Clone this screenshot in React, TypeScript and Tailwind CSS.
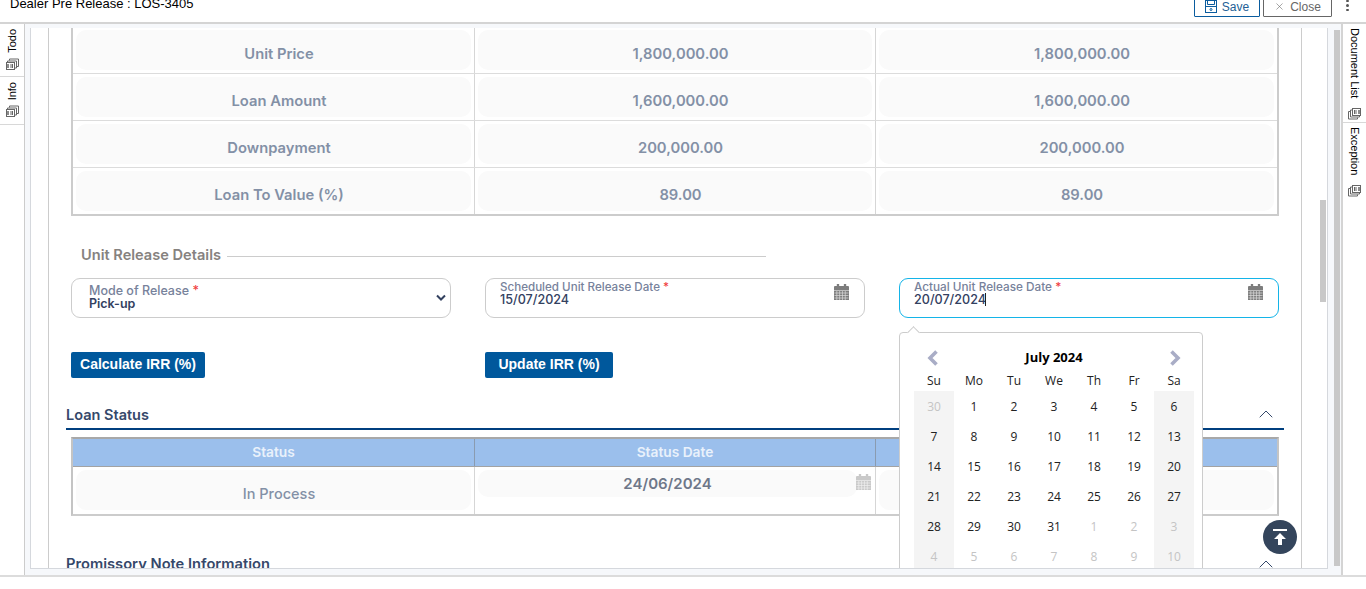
import { ChevronUp, X } from "lucide-react";

const rows = [
  ["Unit Price", "1,800,000.00", "1,800,000.00"],
  ["Loan Amount", "1,600,000.00", "1,600,000.00"],
  ["Downpayment", "200,000.00", "200,000.00"],
  ["Loan To Value (%)", "89.00", "89.00"],
];

const weekDays = ["Su", "Mo", "Tu", "We", "Th", "Fr", "Sa"];

// day number and whether it belongs to another month
const calendarDays: [number, boolean][] = [
  [30, true], [1, false], [2, false], [3, false], [4, false], [5, false], [6, false],
  [7, false], [8, false], [9, false], [10, false], [11, false], [12, false], [13, false],
  [14, false], [15, false], [16, false], [17, false], [18, false], [19, false], [20, false],
  [21, false], [22, false], [23, false], [24, false], [25, false], [26, false], [27, false],
  [28, false], [29, false], [30, false], [31, false], [1, true], [2, true], [3, true],
  [4, true], [5, true], [6, true], [7, true], [8, true], [9, true], [10, true],
];

function TabIcon({ flip }: { flip?: boolean }) {
  return (
    <svg width="13" height="12" viewBox="0 0 13 12" fill="none" stroke="#666" strokeWidth="1" className={flip ? "rotate-180" : ""}>
      <path d="M3.5 2.5V1h9v7.5H11" />
      <path d="M1.5 4.5V3h9v7H9" />
      <rect x="0.5" y="4.5" width="8" height="7" fill="#fff" />
      <path d="M5 6v4M6.5 6v4" />
      <path d="M2 6v4" strokeWidth="1.5" />
    </svg>
  );
}

function CalendarIcon({ color }: { color: string }) {
  return (
    <svg width="15" height="16" viewBox="0 0 16 16" preserveAspectRatio="none">
      <rect x="3" y="0" width="2.5" height="3" fill={color} />
      <rect x="10.5" y="0" width="2.5" height="3" fill={color} />
      <path d="M1 2h14a1 1 0 0 1 1 1v3H0V3a1 1 0 0 1 1-1z" fill={color} />
      <rect x="0" y="6.5" width="16" height="9.5" fill={color} />
      <path d="M0.5 9h15M0.5 11.5h15M0.5 14h15M3 7v9M6 7v9M9 7v9M12 7v9" stroke="#fff" strokeWidth="0.7" opacity="0.75" />
    </svg>
  );
}

function SideTab({ label, height, left, last }: { label: string; height: string; left?: boolean; last?: boolean }) {
  return (
    <div className={`flex flex-col items-center ${left ? "pt-[5px]" : "pt-[4px]"} ${last ? "" : "border-b border-[#d8d8d8]"} ${height}`}>
      <span className={`whitespace-nowrap font-['Liberation_Sans'] text-[11px] leading-[14px] text-black [writing-mode:vertical-rl] ${left ? "rotate-180" : ""}`}>
        {label}
      </span>
      <div className={left ? "mt-[5px]" : "mt-[10px]"}>
        <TabIcon flip={!left} />
      </div>
    </div>
  );
}

function Field({ label, value, focused }: { label: string; value: string; focused?: boolean }) {
  return (
    <div className={`relative h-[40px] rounded-[9px] border bg-white pl-[14px] pt-[2px] ${focused ? "border-[#14b4e8]" : "border-[#cccccc]"}`}>
      <div className={`font-medium leading-[12px] text-[#77829b] ${focused ? "text-[11.75px]" : "text-[11.6px]"}`}>
        {label} <span className="text-[#f04040]">*</span>
      </div>
      <div className="flex h-[13px] items-center text-[12.6px] font-medium leading-[13px] text-[#33415f]">
        {value}
        {focused && <span className="ml-[-1px] h-[13px] w-px bg-[#222]" />}
      </div>
      <div className="absolute right-[15px] top-[5px]">
        <CalendarIcon color="#7d7d7d" />
      </div>
    </div>
  );
}

function NavArrow({ dir }: { dir: "left" | "right" }) {
  return (
    <svg width="14" height="16" viewBox="0 0 14 16" fill="none" stroke="#a9adc6" strokeWidth="3.6">
      <path d={dir === "left" ? "M10.5 1.5L4 8l6.5 6.5" : "M3.5 1.5L10 8l-6.5 6.5"} />
    </svg>
  );
}

function DatePopup() {
  return (
    <div className="absolute left-0 top-[54px] z-10 h-[300px] w-[304px] rounded-[4px] border border-[#cccccc] bg-white pl-[14px] pt-[10px] font-['Open_Sans']">
      <div className="absolute left-[9px] top-[-5px] h-[9px] w-[9px] rotate-45 border-l border-t border-[#cccccc] bg-white" />
      <div className="flex h-[29px] w-[280px] items-center justify-between px-[12px]">
        <NavArrow dir="left" />
        <span className="pt-[1px] text-[13px] font-bold text-black">July 2024</span>
        <NavArrow dir="right" />
      </div>
      <div className="grid w-[280px] grid-cols-7 text-center text-[12px] text-[#222]">
        {weekDays.map((d) => (
          <div key={d} className="flex h-[19px] items-start justify-center leading-[18px]">{d}</div>
        ))}
        {calendarDays.map(([day, muted], i) => {
          const weekend = i % 7 === 0 || i % 7 === 6;
          return (
            <div
              key={i}
              className={`flex h-[30px] items-center justify-center pt-[1px] ${weekend ? "bg-[#f4f4f4]" : ""} ${muted ? "text-[#c4c4c4]" : "text-[#222]"}`}
            >
              {day}
            </div>
          );
        })}
      </div>
    </div>
  );
}

export default function App() {
  return (
    <div className="flex h-[589px] w-[1366px] flex-col overflow-hidden bg-white font-['Inter',sans-serif]">
      {/* HEADER */}
      <header className="flex h-[24px] shrink-0 items-end justify-between overflow-hidden border-b-2 border-[#d4d4d4] pb-[5px] pl-[10px] font-['Liberation_Sans']">
        <span className="mb-[6px] text-[13px] leading-[14px] text-black">Dealer Pre Release : LOS-3405</span>
        <div className="flex items-end">
          <button className="flex h-[24px] w-[66px] items-center justify-center gap-[5px] rounded-[1px] border border-[#0a5c9e] pb-[2px] pt-[5px] text-[12px] text-[#245f96]">
            <svg width="12" height="13" viewBox="0 0 12 13" fill="none" stroke="#0a5c9e">
              <rect x="0.5" y="0.5" width="11" height="12" />
              <path d="M2.5 0.5v4h7v-4M1 6.5h10" />
              <circle cx="6" cy="9.5" r="1" />
            </svg>
            Save
          </button>
          <button className="ml-[3px] flex h-[24px] w-[69px] items-center justify-center gap-[5px] rounded-[1px] border border-[#666] pb-[2px] pt-[5px] text-[12px] text-[#666]">
            <X size={11} strokeWidth={1.25} />
            Close
          </button>
          <div className="mb-[6px] ml-[14px] mr-[17px] flex flex-col gap-[2px]">
            <span className="h-[2.5px] w-[3px] rounded-full bg-[#555]" />
            <span className="h-[2.5px] w-[3px] rounded-full bg-[#555]" />
            <span className="h-[2.5px] w-[3px] rounded-full bg-[#555]" />
          </div>
        </div>
      </header>

      <div className="flex h-[553px] shrink-0 border-b-2 border-[#dcdcdc]">
        {/* TABS IZQUIERDA */}
        <aside className="w-[25px] shrink-0 border-r border-[#cccccc]">
          <SideTab label="Todo" height="h-[53px]" left />
          <SideTab label="Info" height="h-[48px]" left />
        </aside>

        {/* CONTENIDO */}
        <main className="flex min-w-0 flex-1 bg-[#f6f8fb] pb-[6px] pl-[5px] pt-[4px]">
          <div className="flex h-full w-[1298px] border-x border-b border-[#d5d8dd] bg-white">
            <div className="w-[18px] shrink-0 border-r border-[#cccccc]" />
            <div className="relative w-[1253px] shrink-0 overflow-hidden border-r border-[#cccccc]">
              {/* TABLA PRECIOS */}
              <div className="ml-[22px] mt-[-1px] w-[1208px] border-x-2 border-b-2 border-[#cccccc]">
                {rows.map((row, i) => (
                  <div key={row[0]} className={`grid grid-cols-[402px_401px_1fr] ${i < 3 ? "h-[47px] border-b border-[#dcdcdc]" : "h-[46px]"}`}>
                    {row.map((cell, j) => (
                      <div key={j} className={`h-full p-[3px] ${j < 2 ? "border-r border-[#d6d6d6]" : ""}`}>
                        <div className="flex h-[40px] items-end justify-center rounded-[10px] bg-[#fafafa] pb-[7px] pl-[11px] text-[14.75px] font-semibold leading-[17px] text-[#8390a6]">
                          {cell}
                        </div>
                      </div>
                    ))}
                  </div>
                ))}
              </div>

              {/* UNIT RELEASE */}
              <div className="ml-[32px] mt-[30px] flex h-[18px] w-[685px] items-center gap-[6px]">
                <span className="mt-[2px] text-[14.6px] font-semibold text-[#86827f]">Unit Release Details</span>
                <span className="mt-[2px] h-px flex-1 bg-[#cccccc]" />
              </div>

              <div className="ml-[22px] mt-[14px] grid w-[1208px] grid-cols-3 gap-x-[34px]">
                <div className="relative h-[40px] rounded-[9px] border border-[#cccccc] pl-[17px] pt-[6px]">
                  <div className="text-[12.5px] font-medium leading-[12px] text-[#77829b]">
                    Mode of Release <span className="text-[#f04040]">*</span>
                  </div>
                  <div className="text-[12.5px] font-semibold leading-[14px] text-[#33415f]">Pick-up</div>
                  <svg className="absolute right-[4px] top-[15px]" width="10" height="8" viewBox="0 0 10 8" fill="none" stroke="#33415f" strokeWidth="2">
                    <path d="M1 1.5l4 4 4-4" />
                  </svg>
                </div>
                <Field label="Scheduled Unit Release Date" value="15/07/2024" />
                <div className="relative">
                  <Field label="Actual Unit Release Date" value="20/07/2024" focused />
                  <DatePopup />
                </div>
              </div>

              <div className="ml-[22px] mt-[34px] grid h-[26px] w-[1208px] grid-cols-3 gap-x-[34px] font-['Liberation_Sans']">
                <div>
                  <button className="h-[26px] w-[134px] rounded-[2px] bg-[#00589c] pb-[1px] text-[14px] font-bold text-white">Calculate IRR (%)</button>
                </div>
                <div>
                  <button className="h-[26px] w-[128px] rounded-[2px] bg-[#00589c] pb-[1px] text-[14px] font-bold text-white">Update IRR (%)</button>
                </div>
              </div>

              {/* LOAN STATUS */}
              <div className="ml-[17px] mt-[25px] flex h-[27px] w-[1218px] items-start justify-between border-b-2 border-[#003f7f]">
                <span className="mt-[2px] text-[14.5px] font-semibold leading-[20px] text-[#35486a]">Loan Status</span>
                <ChevronUp size={24} strokeWidth={1} className="mr-[6px] mt-[-1px] text-[#35486a]" />
              </div>

              <div className="ml-[22px] mt-[7px] w-[1208px] border-x-2 border-b-2 border-t-2 border-x-[#c4c4c4] border-b-[#cccccc] border-t-[#a8a8a8]">
                <div className="grid h-[28px] grid-cols-[402px_401px_1fr] border-b border-[#a3a3a3] bg-[#9bbfec] text-[13.75px] font-semibold text-[#e9f1fb]">
                  <div className="flex items-center justify-center border-r border-[#8a9bb0]">Status</div>
                  <div className="flex items-center justify-center border-r border-[#8a9bb0]">Status Date</div>
                  <div />
                </div>
                <div className="grid h-[47px] grid-cols-[402px_401px_1fr]">
                  <div className="border-r border-[#d6d6d6] p-[3px]">
                    <div className="flex h-[40px] items-end justify-center rounded-[10px] bg-[#fafafa] pb-[8px] pl-[11px] text-[14.5px] font-medium leading-[17px] text-[#8390a6]">In Process</div>
                  </div>
                  <div className="relative border-r border-[#d6d6d6] p-[3px]">
                    <div className="flex h-[27px] w-[379px] items-center justify-center rounded-[10px] bg-[#fafafa] text-[15px] font-semibold leading-[17px] text-[#6e7789]">24/06/2024</div>
                    <div className="absolute left-[381px] top-[7px]">
                      <CalendarIcon color="#c9c9c9" />
                    </div>
                  </div>
                  <div className="p-[3px]">
                    <div className="h-[40px] rounded-[10px] bg-[#fafafa]" />
                  </div>
                </div>
              </div>

              {/* PROMISSORY */}
              <div className="ml-[17px] mt-[38px] flex w-[1218px] items-start justify-between">
                <span className="text-[14.7px] font-semibold leading-[20px] text-[#35486a]">Promissory Note Information</span>
                <ChevronUp size={24} strokeWidth={1} className="mr-[6px] mt-[-2px] text-[#35486a]" />
              </div>

              <button className="absolute left-[1214px] top-[492px] z-20 flex h-[34px] w-[34px] items-center justify-center rounded-full bg-[#34455c]">
                <svg width="14" height="16" viewBox="0 0 14 16" fill="#fff">
                  <rect x="0" y="0" width="14" height="2" />
                  <path d="M7 4l6 6H9v6H5v-6H1z" />
                </svg>
              </button>
            </div>
            <div className="flex-1 pl-[18px] pt-[172px]">
              <div className="h-[102px] w-[6px] bg-[#c8c8c8]" />
            </div>
          </div>
          <div className="ml-[6px] mt-[2px] h-[536px] w-[6px] bg-[#c8c8c8]" />
        </main>

        {/* TABS DERECHA */}
        <aside className="w-[25px] shrink-0 border-l-2 border-[#d4d4d4]">
          <SideTab label="Document List" height="h-[99px]" />
          <SideTab label="Exception" height="h-[80px]" last />
        </aside>
      </div>
    </div>
  );
}
